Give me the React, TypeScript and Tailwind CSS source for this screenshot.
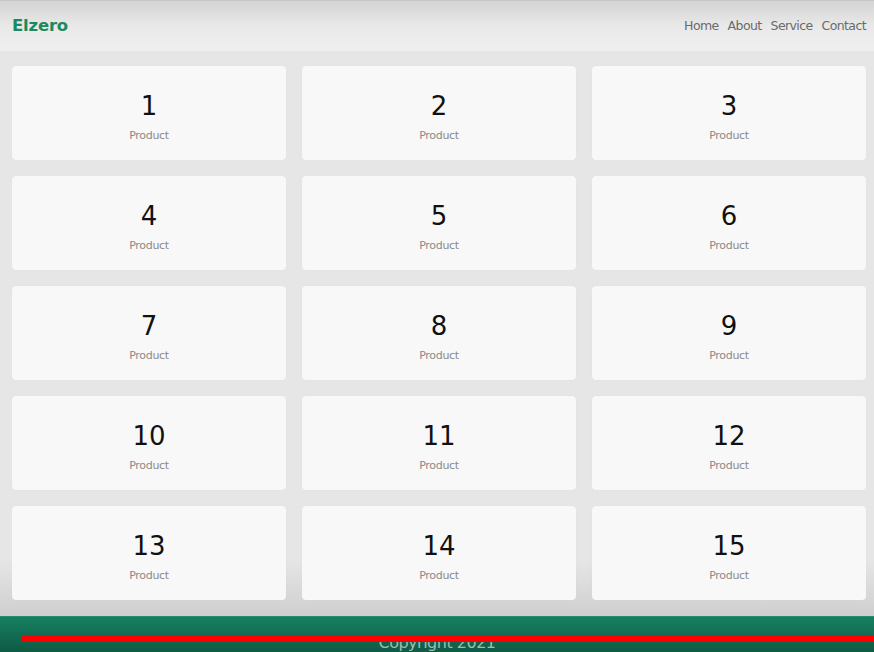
import React from "react";

export default function App() {
  const items = Array.from({ length: 15 }, (_, i) => i + 1);
  return (
    <div
      className="w-[874px] h-[652px] overflow-hidden flex flex-col bg-[#e6e6e6]"
      style={{ fontFamily: '"DejaVu Sans", Verdana, sans-serif' }}
    >
      <header className="h-[51px] shrink-0 flex items-center justify-between pl-[12px] pr-[8px] bg-gradient-to-b from-[#d4d4d4] via-[#e9e9e9] to-[#efefef] border-t border-[#c8c8c8]">
        <div className="text-[#1c8a5c] font-bold text-[16.5px] tracking-[-0.2px] mt-[1px]">Elzero</div>
        <nav className="flex gap-[9px] text-[12.5px] text-[#6a6a6a] tracking-[-0.6px] mt-[1px]">
          <span>Home</span>
          <span>About</span>
          <span>Service</span>
          <span>Contact</span>
        </nav>
      </header>
      <main className="flex-1 pt-[15px] pl-[12px] pr-[8px] bg-gradient-to-b from-[#e6e6e6] via-[#e6e6e6] via-90% to-[#cfcfcf]">
        <div className="grid grid-cols-3 gap-x-[16px] gap-y-[16px]">
          {items.map((n) => (
            <div
              key={n}
              className="h-[94px] rounded-[4px] bg-[#f8f8f8] flex flex-col items-center pt-[23px] shadow-[0_0_1px_rgba(0,0,0,0.08)]"
            >
              <div className="text-[26px] leading-[34px] text-[#111]">{n}</div>
              <div className="text-[11px] text-[#8a8a8a] mt-[5px] tracking-[-0.3px]">Product</div>
            </div>
          ))}
        </div>
      </main>
      <footer className="relative h-[36px] shrink-0 bg-gradient-to-b from-[#178060] to-[#0f5a44] border-t border-[#2a8a6a] flex justify-center pt-[14px]">
        <div className="text-[16px] text-[#9fbcb2] tracking-[-0.5px]">Copyright 2021</div>
        <div className="absolute left-[22px] right-0 top-[19px] h-[6px] bg-[#ff0000]" />
      </footer>
    </div>
  );
}
